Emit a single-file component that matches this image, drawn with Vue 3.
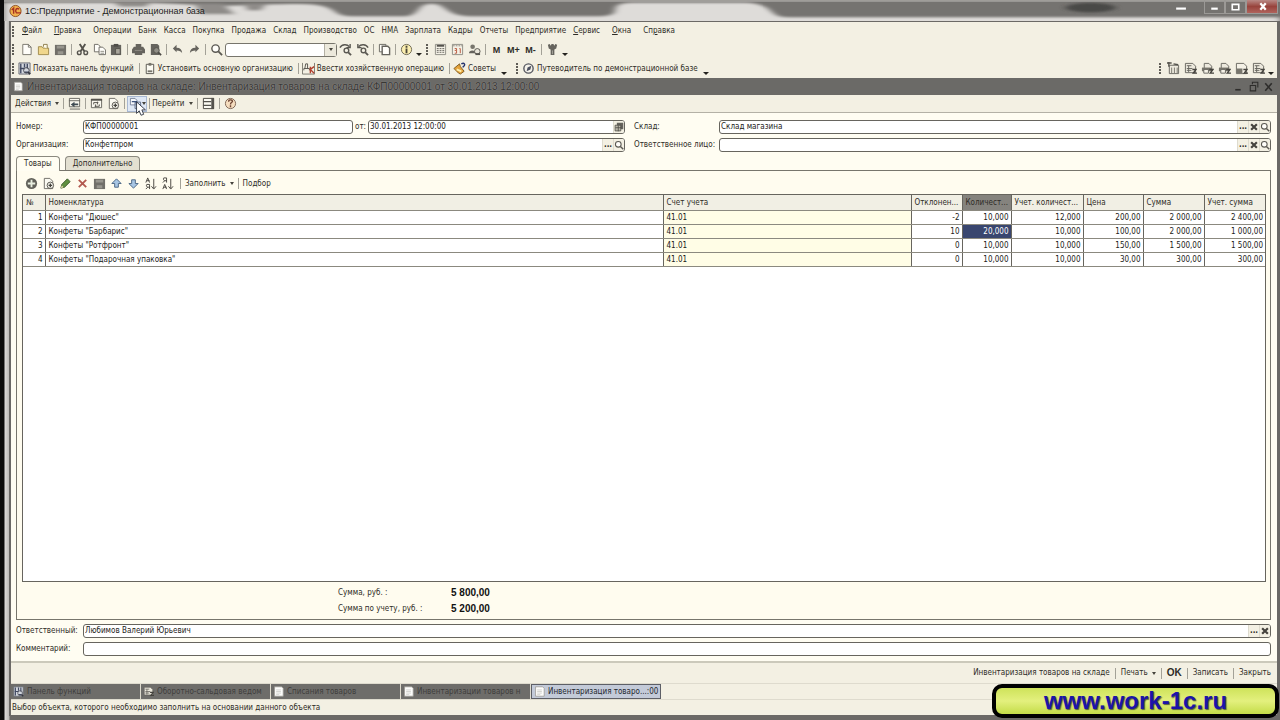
<template>
  <div class="desktop">
    <svg class="sprite" aria-hidden="true">
      <symbol id="i-new" viewBox="0 0 14 14"><path d="M3 1.500h6l3 3v8H3z" fill="#fffefa" stroke="#77756c" /><path d="M9 1.500v3h3" fill="none" stroke="#77756c" /></symbol>
      <symbol id="i-open" viewBox="0 0 14 14"><path d="M1.500 4h4l1 1.500h6v7h-11z" fill="#f0d78c" stroke="#a08a4c" /><path d="M7 4V1.500h4V6" fill="#fffbe8" stroke="#8b7b4c" /></symbol>
      <symbol id="i-save" viewBox="0 0 14 14"><path d="M1 2h12v11H1z" fill="#716f69" /><path d="M3 3h8v3H3zM4 9h6v3H4z" fill="#98968e" /></symbol>
      <symbol id="i-cut" viewBox="0 0 14 14"><path d="M4 1l5 8M10 1L5 9" stroke="#55534d" stroke-width="2" /><circle cx="3.500" cy="10.500" r="2" fill="none" stroke="#55534d" stroke-width="1.500" /><circle cx="10.500" cy="10.500" r="2" fill="none" stroke="#55534d" stroke-width="1.500" /></symbol>
      <symbol id="i-copy" viewBox="0 0 14 14"><path d="M1.500 1.500h4l2 2v6h-6z" fill="#fffefa" stroke="#6d6b64" /><path d="M6.500 4.500h4l3 3v5h-7z" fill="#fffefa" stroke="#6d6b64" /><path d="M8 9h4M8 11h4" stroke="#8d8b83" /></symbol>
      <symbol id="i-paste" viewBox="0 0 14 14"><path d="M1 2h11v11H1z" fill="#66645e" /><path d="M4 1h5v3H4z" fill="#4f4d48" /><path d="M6 6h5v6H6z" fill="#a8a59b" stroke="#55534d" /></symbol>
      <symbol id="i-print" viewBox="0 0 14 14"><path d="M4 1h6v3h2l2 3v4h-3v2H3v-2H0V7l2-3h2z" fill="#66645e" /><path d="M3 8h8" stroke="#8f8d86" /></symbol>
      <symbol id="i-preview" viewBox="0 0 14 14"><path d="M2 1h7l2 2v10H2z" fill="#66645e" /><circle cx="8" cy="8" r="3" fill="#908e86" stroke="#55534d" /><path d="M10 10l3 3" stroke="#4b4944" stroke-width="2" /></symbol>
      <symbol id="i-undo" viewBox="0 0 14 14"><path d="M2 6l4-4v3c4 0 6 2 6 6-1-2-3-3-6-3v2z" fill="#66645e" /></symbol>
      <symbol id="i-redo" viewBox="0 0 14 14"><path d="M12 6L8 2v3c-4 0-6 2-6 6 1-2 3-3 6-3v2z" fill="#66645e" /></symbol>
      <symbol id="i-zoom" viewBox="0 0 14 14"><circle cx="6" cy="6" r="4" fill="#fffefa" stroke="#5a5852" stroke-width="1.500" /><path d="M9 9l4 4" stroke="#5a5852" stroke-width="2" /></symbol>
      <symbol id="i-findnext" viewBox="0 0 14 14"><path d="M1 5c2-4 8-4 10-1M12 1v4H8" fill="none" stroke="#5a5852" stroke-width="1.500" /><circle cx="8" cy="8" r="2.500" fill="none" stroke="#5a5852" stroke-width="1.500" /><path d="M10 10l3 3" stroke="#5a5852" stroke-width="2" /></symbol>
      <symbol id="i-findprev" viewBox="0 0 14 14"><path d="M13 5C11 1 5 1 3 4M2 1v4h4" fill="none" stroke="#5a5852" stroke-width="1.500" /><circle cx="8" cy="8" r="2.500" fill="none" stroke="#5a5852" stroke-width="1.500" /><path d="M10 10l3 3" stroke="#5a5852" stroke-width="2" /></symbol>
      <symbol id="i-windows" viewBox="0 0 14 14"><path d="M1.500 1.500h7v8h-7z" fill="#fffefa" stroke="#66645e" /><path d="M4.500 3.500h6l2 2v7h-8z" fill="#fffefa" stroke="#66645e" stroke-width="1.500" /></symbol>
      <symbol id="i-info" viewBox="0 0 14 14"><circle cx="7" cy="7" r="5.500" fill="#fbeeb0" stroke="#6b6650" /><path d="M7 6v5M7 3v2" stroke="#4a4638" stroke-width="2" /></symbol>
      <symbol id="i-calc" viewBox="0 0 14 14"><path d="M1.500 1.500h11v11h-11z" fill="#f4f1e6" stroke="#8d8b83" /><path d="M3 3h8" stroke="#55534d" stroke-width="2" /><path d="M3 6h8M3 8h8M3 10h8" stroke="#66645e" stroke-dasharray="2 1" /></symbol>
      <symbol id="i-cal" viewBox="0 0 14 14"><path d="M1.500 1.500h11v11h-11z" fill="#f4f1e6" stroke="#8d8b83" /><path d="M2 3h10" stroke="#8a867c" stroke-dasharray="2 1" /><path d="M4 6h2v2H4M6 8v3H4M9 6h1v5" stroke="#b8553b" fill="none" /></symbol>
      <symbol id="i-users" viewBox="0 0 14 14"><circle cx="5" cy="4" r="2.500" fill="#77756c" /><path d="M1 11c0-4 7-4 8 0z" fill="#66645e" /><circle cx="10" cy="9" r="3" fill="#e9e6da" stroke="#55534d" /><path d="M8 12h5" stroke="#55534d" stroke-width="2" /></symbol>
      <symbol id="i-wrench" viewBox="0 0 14 14"><path d="M2 2l2-1 1 2 1-2h2l1 2 1-2 2 1-1 4-2 1v6H5V7L3 6z" fill="#66645e" /><path d="M7 8v4" stroke="#a5a399" /></symbol>
      <symbol id="i-panel" viewBox="0 0 14 14"><path d="M1 1h12v12H1z" fill="#d3d7de" stroke="#6a6c74" /><path d="M3 2v10M7 2v4M10 2v5M2 7h5M7 11h4" stroke="#414a63" stroke-width="1.500" /><circle cx="9" cy="9" r="3" fill="none" stroke="#4d4f58" /><path d="M11 11l2 2" stroke="#33353d" stroke-width="2" /></symbol>
      <symbol id="i-org" viewBox="0 0 14 14"><path d="M3.500 2.500h8v10h-8z" fill="#fbfaf2" stroke="#55534d" /><path d="M6 1h3v3H6z" fill="#77756c" /><path d="M5 10h5" stroke="#77756c" stroke-width="2" /></symbol>
      <symbol id="i-dtkt" viewBox="0 0 14 14"><path d="M.500 1v12h13V1" fill="none" stroke="#77756c" /><path d="M3 7l1-5h2v5M2 9V7h6v2" fill="none" stroke="#55534d" /><path d="M9 5v7M13 5L9 8l4 4" fill="none" stroke="#b3402e" stroke-width="1.500" /></symbol>
      <symbol id="i-tips" viewBox="0 0 14 14"><path d="M1 7l6-5 1 3 4 5-4 3-2-1z" fill="#e5a33b" stroke="#7c5b23" /><path d="M4 8l5 2" stroke="#fff0b0" stroke-width="2" /><path d="M9 2c3-2 5 1 2 3v1" fill="none" stroke="#26346d" stroke-width="1.500" /></symbol>
      <symbol id="i-guide" viewBox="0 0 14 14"><circle cx="7" cy="7" r="5" fill="#f4f2ea" stroke="#55575f" stroke-width="1.500" /><path d="M5 10l1-4 4-2-1 4z" fill="#4c5060" /></symbol>
      <symbol id="i-report" viewBox="0 0 14 14"><path d="M1.500 1.500h8l3 3v7h-11z" fill="#ece9dd" stroke="#66645e" /><path d="M3 4h5M3 7h6M3 9h5M5 4v7" stroke="#66645e" /><path d="M9 8h4l-3 4h4" fill="none" stroke="#45433e" stroke-width="1.500" /></symbol>
      <symbol id="i-reportprint" viewBox="0 0 14 14"><path d="M3.500 1.500h5l3 3v3h-8z" fill="#ece9dd" stroke="#66645e" /><path d="M1 6h11v4H1z" fill="#77756c" /><path d="M3 8h5v4H3z" fill="#f5f2e7" stroke="#66645e" /><path d="M9 8h4l-3 4h4" fill="none" stroke="#45433e" stroke-width="1.500" /></symbol>
      <symbol id="i-reportgrid" viewBox="0 0 14 14"><path d="M2.500 3.500h10v9h-10z" fill="#ece9dd" stroke="#66645e" /><path d="M0 1h5M2 0v5M7 2l5 1" stroke="#55534d" stroke-width="1.500" /><path d="M5 6v6M8 6v6M11 6v6" stroke="#77756c" /></symbol>
      <symbol id="i-reportblock" viewBox="0 0 14 14"><path d="M1.500 1.500h8l3 3v8h-11z" fill="#f4f1e6" stroke="#66645e" /><path d="M2 7h6v5H2z" fill="#77756c" /><path d="M9 8h4l-3 4h4" fill="none" stroke="#45433e" stroke-width="1.500" /></symbol>
      <symbol id="i-doc" viewBox="0 0 14 14"><path d="M2 1h9l2 2v10H2z" fill="#fdfdfb" stroke="#9a9893" /><path d="M4 5h6M4 7h6M4 9h6M4 11h4" stroke="#c8c8c4" /></symbol>
      <symbol id="i-goto" viewBox="0 0 14 14"><path d="M1.500 1.500h11v9h-11z" fill="#f9f7ee" stroke="#66645e" /><path d="M1 4h12M2 13h11" stroke="#66645e" /><path d="M3 8l4-3v2h4v2H7v2z" fill="#3f4a52" /></symbol>
      <symbol id="i-refresh" viewBox="0 0 14 14"><path d="M1.500 2.500h11v9h-11z" fill="#f9f7ee" stroke="#66645e" /><path d="M1 3h12" stroke="#55534d" stroke-width="2" /><path d="M4 8V6h5M10 8v2H5M8 5v3M6 8v3" fill="none" stroke="#55534d" /></symbol>
      <symbol id="i-docadd" viewBox="0 0 14 14"><path d="M2.500 1.500h6l3 3v8h-9z" fill="#fbfaf2" stroke="#6d6b64" /><circle cx="9" cy="9" r="3.500" fill="#fbfaf2" stroke="#55534d" /><path d="M7 9h4M9 7v4" stroke="#45433e" stroke-width="1.500" /></symbol>
      <symbol id="i-based" viewBox="0 0 14 14"><path d="M1.500 1.500h5l2 2v5h-7z" fill="#f7f9fc" stroke="#77839a" /><path d="M6.500 5.500h6v7h-6z" fill="#dbe4f2" stroke="#5b6a86" /><path d="M3 5h5v4" fill="none" stroke="#3f557e" stroke-width="1.500" /></symbol>
      <symbol id="i-list" viewBox="0 0 14 14"><path d="M1.500 1.500h11v11h-11z" fill="#fbfaf2" stroke="#45433e" /><path d="M1 5h9M1 9h9" stroke="#55534d" stroke-width="1.500" /><path d="M10 1h3v12h-3z" fill="#55534d" /></symbol>
      <symbol id="i-help" viewBox="0 0 14 14"><circle cx="7" cy="7" r="5.500" fill="#f5ddbf" stroke="#7b6252" /><path d="M5 5c0-3 5-2 4 0-1 1-2 1-2 3M7 9v2" fill="none" stroke="#6f4635" stroke-width="1.500" /></symbol>
      <symbol id="i-add" viewBox="0 0 14 14"><circle cx="7" cy="7" r="6" fill="#62615a" /><path d="M7 3v8M3 7h8" stroke="#e9efe0" stroke-width="2" /></symbol>
      <symbol id="i-edit" viewBox="0 0 14 14"><path d="M2 12l1-4 6-6 3 3-6 6z" fill="#5f8f3f" stroke="#3d5a2d" /><path d="M2 12l3-1-2-2z" fill="#e4d9a8" /></symbol>
      <symbol id="i-del" viewBox="0 0 14 14"><path d="M3 3l8 8M11 3l-8 8" stroke="#b35a50" stroke-width="2" /></symbol>
      <symbol id="i-up" viewBox="0 0 14 14"><path d="M7 2l5 5H9v4H5V7H2z" fill="#a8c6e4" stroke="#4a6583" /></symbol>
      <symbol id="i-down" viewBox="0 0 14 14"><path d="M7 12L2 7h3V3h4v4h3z" fill="#a8c6e4" stroke="#4a6583" /></symbol>
      <symbol id="i-sortaz" viewBox="0 0 14 14"><path d="M2 6l2-5 2 5M3 4h3M6 13V8H3c-1 1 0 3 1 3h2M4 11l-2 2" fill="none" stroke="#45433e" /><path d="M10.500 2v10M8 10l2.500 3L13 10" fill="none" stroke="#45433e" /></symbol>
      <symbol id="i-sortza" viewBox="0 0 14 14"><path d="M6 6V1H3c-1 1 0 3 1 3h2M4 4L2 6M2 13l2-5 2 5M3 11h3" fill="none" stroke="#45433e" /><path d="M10.500 2v10M8 10l2.500 3L13 10" fill="none" stroke="#45433e" /></symbol>
      <symbol id="i-x" viewBox="0 0 14 14"><path d="M3 3l8 8M11 3l-8 8" stroke="#45433e" stroke-width="3" /></symbol>
      <symbol id="i-picker" viewBox="0 0 14 14"><path d="M4 1h9v9H4z" fill="#66645e" /><path d="M1.500 4.500h8v8h-8z" fill="#b9b6a9" stroke="#45433e" /><path d="M2 8h8M6 5v8" stroke="#45433e" /></symbol>
    </svg>

    <header class="titlebar">
      <svg class="glass" viewBox="0 0 1280 22" preserveAspectRatio="none" aria-hidden="true">
        <defs><filter id="soft"><feGaussianBlur stdDeviation="4 1" /></filter></defs>
        <rect width="1280" height="22" fill="#757370" />
        <g filter="url(#soft)">
          <path d="M0 3H110C180 3 190 6 220 6S300 2 318 6 330 17 350 17H405C418 14 414 4 429 4S442 16 465 17H600C625 16 600 4 630 3H745C775 5 765 17 785 18H1280V24H0z" fill="#dedcd9" />
          <path d="M108 2h42l-8 5h-26zM190 4h30l12 11h-34zM240 4h24l-6 7h-14z" fill="#8f8c89" />
          <ellipse cx="1090" cy="8" rx="25" ry="5" fill="#4a4846" />
        </g>
        <path d="M0 1H1280" stroke="#c4c2bf" />
      </svg>
      <svg class="logo" viewBox="0 0 14 14" aria-hidden="true"><circle cx="7" cy="7" r="6" fill="#f1b04c" stroke="#8d4f22" /><path d="M3 6l2-2v6M11 5C8 3 6 6 8 9h5" fill="none" stroke="#a83222" stroke-width="1.500" /></svg>
      <h1>1С:Предприятие - Демонстрационная база</h1>
      <div class="win-buttons">
        <button class="win plain" aria-label="Скрыть панель"><svg viewBox="0 0 12 12"><path d="M2 7h9" stroke="#fff" stroke-width="2" /></svg></button>
        <button class="win" aria-label="Свернуть"><svg viewBox="0 0 12 12"><path d="M3 8h6" stroke="#fff" stroke-width="2" /></svg></button>
        <button class="win" aria-label="Развернуть"><svg viewBox="0 0 12 12"><path d="M3 9V4h6v5z" fill="none" stroke="#fff" stroke-width="1.500" /></svg></button>
        <button class="win close" aria-label="Закрыть окно"><svg viewBox="0 0 12 12"><path d="M4 3l5 6M9 3L4 9" stroke="#fff" stroke-width="2" /></svg></button>
      </div>
    </header>

    <div class="window">
      <nav class="bar menu">
        <span class="grip"></span>
        <button v-for="m in menu" :key="m.text" :class="{ wide: m.key }">
          <u v-if="m.key === 1">{{ m.text[0] }}</u><template v-if="m.key === 1">{{ m.text.slice(1) }}</template>
          <template v-else-if="m.key">{{ m.text.slice(0, 2) }}<u>{{ m.text[2] }}</u>{{ m.text.slice(3) }}</template>
          <template v-else>{{ m.text }}</template>
        </button>
      </nav>

      <div class="bar">
        <span class="grip"></span>
        <template v-for="(t, i) in mainTools" :key="i">
          <span v-if="t === '|'" class="sep"></span>
          <span v-else-if="t === ':'" class="grip"></span>
          <button v-else-if="t === 'v'" class="more" aria-label="Ещё"></button>
          <div v-else-if="t === 'search'" class="combo">
            <input type="text" aria-label="Поиск" />
            <button aria-label="История поиска"><i class="arrow"></i></button>
          </div>
          <button v-else-if="t[0] === 'M'" class="tool mem">{{ t }}</button>
          <button v-else class="tool" :aria-label="t"><svg><use :href="`#i-${t}`" /></svg></button>
        </template>
      </div>

      <div class="bar">
        <span class="grip"></span>
        <button class="cmd"><svg><use href="#i-panel" /></svg>Показать панель функций</button>
        <span class="sep wide-sep"></span>
        <button class="cmd"><svg><use href="#i-org" /></svg>Установить основную организацию</button>
        <span class="sep wide-sep"></span>
        <button class="cmd"><svg><use href="#i-dtkt" /></svg>Ввести хозяйственную операцию</button>
        <span class="sep wide-sep"></span>
        <button class="cmd"><svg><use href="#i-tips" /></svg>Советы</button>
        <button class="more wide-more" aria-label="Ещё"></button>
        <span class="grip"></span>
        <button class="cmd"><svg><use href="#i-guide" /></svg>Путеводитель по демонстрационной базе</button>
        <button class="more wide-more" aria-label="Ещё"></button>
        <div class="right">
          <span class="grip"></span>
          <button v-for="(r, i) in reports" :key="i" class="tool" :aria-label="`Отчет ${i + 1}`"><svg><use :href="`#i-${r}`" /></svg></button>
          <button class="more" aria-label="Ещё"></button>
        </div>
      </div>

      <div class="doc-title">
        <svg><use href="#i-doc" /></svg>
        <h2>Инвентаризация товаров на складе: Инвентаризация товаров на складе КФП00000001 от 30.01.2013 12:00:00</h2>
        <div class="doc-buttons">
          <button aria-label="Свернуть документ"><svg viewBox="0 0 12 12"><path d="M3 9h5" stroke="#2e2d2b" stroke-width="1.500" /></svg></button>
          <button aria-label="Восстановить документ"><svg viewBox="0 0 12 12"><path d="M5 4V2h5v5M3 5h5v5H3z" fill="none" stroke="#2e2d2b" /></svg></button>
          <button aria-label="Закрыть документ"><svg viewBox="0 0 12 12"><path d="M3 3l6 7M9 3l-6 7" stroke="#2e2d2b" stroke-width="1.500" /></svg></button>
        </div>
      </div>

      <div class="bar doc-bar">
        <button class="drop">Действия<i class="arrow"></i></button>
        <span class="sep"></span>
        <button class="tool" aria-label="Перейти к списку"><svg><use href="#i-goto" /></svg></button>
        <span class="sep"></span>
        <button class="tool" aria-label="Обновить"><svg><use href="#i-refresh" /></svg></button>
        <button class="tool" aria-label="Скопировать"><svg><use href="#i-docadd" /></svg></button>
        <span class="sep"></span>
        <button class="tool hover" aria-label="Ввести на основании">
          <svg><use href="#i-based" /></svg><i class="arrow"></i>
          <svg class="cursor" viewBox="0 0 12 18"><path d="M1 1v13l3-3 2 5 3-1-2-5h4z" fill="#fff" stroke="#2d3440" /></svg>
        </button>
        <span class="sep"></span>
        <button class="drop">Перейти<i class="arrow"></i></button>
        <span class="sep"></span>
        <button class="tool" aria-label="Список"><svg><use href="#i-list" /></svg></button>
        <span class="sep"></span>
        <button class="tool" aria-label="Справка"><svg><use href="#i-help" /></svg></button>
      </div>

      <main class="form">
        <div class="fields">
          <div class="line">
            <label for="number" class="lbl">Номер:</label>
            <div class="box number"><input id="number" v-model="doc.number" type="text" /></div>
            <label for="date" class="from">от:</label>
            <div class="box"><input id="date" v-model="doc.date" type="text" /><button aria-label="Календарь"><svg><use href="#i-picker" /></svg></button></div>
          </div>
          <div class="line">
            <label for="store" class="lbl long">Склад:</label>
            <div class="box"><input id="store" v-model="doc.store" type="text" /><button>...</button><button aria-label="Очистить склад"><svg><use href="#i-x" /></svg></button><button aria-label="Открыть склад"><svg><use href="#i-zoom" /></svg></button></div>
          </div>
          <div class="line">
            <label for="org" class="lbl">Организация:</label>
            <div class="box"><input id="org" v-model="doc.org" type="text" /><button>...</button><button aria-label="Открыть организацию"><svg><use href="#i-zoom" /></svg></button></div>
          </div>
          <div class="line">
            <label for="person" class="lbl long">Ответственное лицо:</label>
            <div class="box"><input id="person" v-model="doc.person" type="text" /><button>...</button><button aria-label="Очистить лицо"><svg><use href="#i-x" /></svg></button><button aria-label="Открыть лицо"><svg><use href="#i-zoom" /></svg></button></div>
          </div>
        </div>

        <div class="tabs">
          <button v-for="t in tabs" :key="t" :class="{ active: t === activeTab }" @click="activeTab = t">{{ t }}</button>
        </div>

        <section class="panel">
          <div class="bar table-bar">
            <button v-for="t in tableTools" :key="t" class="tool" :aria-label="t"><svg><use :href="`#i-${t}`" /></svg></button>
            <span class="sep"></span>
            <button class="drop">Заполнить<i class="arrow"></i></button>
            <span class="sep"></span>
            <button class="drop">Подбор</button>
          </div>

          <div class="grid">
            <table>
              <colgroup>
                <col class="c-n" /><col /><col class="c-acc" /><col class="c-dev" /><col class="c-qty" /><col class="c-uqty" /><col class="c-price" /><col class="c-sum" /><col class="c-sum" />
              </colgroup>
              <thead>
                <tr>
                  <th v-for="(c, i) in columns" :key="c" :class="{ current: i === 4 }">{{ c }}</th>
                </tr>
              </thead>
              <tbody>
                <tr v-for="(r, ri) in rows" :key="ri">
                  <td v-for="(v, i) in r" :key="i" :class="{ num: i === 0 || i > 2, acc: i === 2, selected: ri === 1 && i === 4 }">{{ v }}</td>
                </tr>
              </tbody>
            </table>
          </div>

          <dl class="totals">
            <dt>Сумма, руб. :</dt><dd>5 800,00</dd>
            <dt>Сумма по учету, руб. :</dt><dd>5 200,00</dd>
          </dl>
        </section>

        <div class="bottom-fields">
          <div class="line">
            <label for="resp" class="lbl">Ответственный:</label>
            <div class="box"><input id="resp" v-model="doc.responsible" type="text" /><button>...</button><button aria-label="Очистить ответственного"><svg><use href="#i-x" /></svg></button></div>
          </div>
          <div class="line">
            <label for="comment" class="lbl">Комментарий:</label>
            <div class="box"><input id="comment" v-model="doc.comment" type="text" /></div>
          </div>
        </div>
      </main>

      <footer class="bar actions">
        <button class="drop">Инвентаризация товаров на складе</button>
        <span class="sep"></span>
        <button class="drop">Печать<i class="arrow"></i></button>
        <span class="sep"></span>
        <button class="drop ok">OK</button>
        <span class="sep"></span>
        <button class="drop">Записать</button>
        <span class="sep"></span>
        <button class="drop">Закрыть</button>
      </footer>

      <div class="taskbar">
        <button v-for="w in windows" :key="w.text" :class="{ active: w.active }"><svg><use :href="`#i-${w.icon}`" /></svg><span>{{ w.text }}</span></button>
      </div>
      <div class="status">Выбор объекта, которого необходимо заполнить на основании данного объекта</div>
    </div>

    <a class="site" href="#">www.work-1c.ru</a>
  </div>
</template>

<script setup>
import { reactive, ref } from 'vue'

// key: which letter is underlined (1 - first, 3 - third)
const menu = [
  { text: 'Файл', key: 1 },
  { text: 'Правка', key: 1 },
  { text: 'Операции' },
  { text: 'Банк' },
  { text: 'Касса' },
  { text: 'Покупка' },
  { text: 'Продажа' },
  { text: 'Склад' },
  { text: 'Производство' },
  { text: 'ОС' },
  { text: 'НМА' },
  { text: 'Зарплата' },
  { text: 'Кадры' },
  { text: 'Отчеты' },
  { text: 'Предприятие' },
  { text: 'Сервис', key: 1 },
  { text: 'Окна', key: 1 },
  { text: 'Справка', key: 3 }
]

const mainTools = [
  'new', 'open', 'save', '|', 'cut', 'copy', 'paste', '|', 'print', 'preview', '|',
  'undo', 'redo', '|', 'zoom', 'search', 'findnext', 'findprev', '|', 'windows', '|',
  'info', 'v', ':', 'calc', 'cal', 'users', '|', 'M', 'M+', 'M-', '|', 'wrench', 'v'
]
const reports = ['reportgrid', 'report', 'reportprint', 'reportprint', 'reportblock', 'report']
const tableTools = ['add', 'docadd', 'edit', 'del', 'save', 'up', 'down', 'sortaz', 'sortza']

const doc = reactive({
  number: 'КФП00000001',
  date: '30.01.2013 12:00:00',
  store: 'Склад магазина',
  org: 'Конфетпром',
  person: '',
  responsible: 'Любимов Валерий Юрьевич',
  comment: ''
})

const tabs = ['Товары', 'Дополнительно']
const activeTab = ref('Товары')

const columns = ['№', 'Номенклатура', 'Счет учета', 'Отклонен...', 'Количест...', 'Учет. количест...', 'Цена', 'Сумма', 'Учет. сумма']
const rows = [
  [1, 'Конфеты "Дюшес"', '41.01', '-2', '10,000', '12,000', '200,00', '2 000,00', '2 400,00'],
  [2, 'Конфеты "Барбарис"', '41.01', '10', '20,000', '10,000', '100,00', '2 000,00', '1 000,00'],
  [3, 'Конфеты "Ротфронт"', '41.01', '0', '10,000', '10,000', '150,00', '1 500,00', '1 500,00'],
  [4, 'Конфеты "Подарочная упаковка"', '41.01', '0', '10,000', '10,000', '30,00', '300,00', '300,00']
]

const windows = [
  { text: 'Панель функций', icon: 'panel' },
  { text: 'Оборотно-сальдовая ведом', icon: 'report' },
  { text: 'Списания товаров', icon: 'doc' },
  { text: 'Инвентаризации товаров н', icon: 'doc' },
  { text: 'Инвентаризация товаро...:00', icon: 'doc', active: true }
]
</script>

<style>
body {
  margin: 0;
  background: #6b6966;
}
</style>

<style scoped>
.desktop {
  position: relative;
  display: flex;
  flex-direction: column;
  min-height: 100vh;
  box-sizing: border-box;
  padding: 0 2px 4px 9px;
  background: linear-gradient(90deg, #0c0c0c 4px, #dcdad8 5px, #bdbbb8 9px, #6b6966 10px);
  font-family: "DejaVu Sans Condensed", "Open Sans", "Liberation Sans", sans-serif;
  font-size: 8px;
  line-height: 12px;
  color: #2e2c26;
  white-space: nowrap;
}

.sprite {
  position: absolute;
  width: 0;
  height: 0;
}

button {
  font: inherit;
  color: inherit;
  background: none;
  border: 0;
  padding: 0;
  margin: 0;
  white-space: nowrap;
}

svg {
  display: block;
  flex: none;
  width: 13px;
  height: 13px;
}

.titlebar {
  position: relative;
  display: flex;
  align-items: center;
  height: 21px;
}

.glass {
  position: absolute;
  left: -5px;
  top: 0;
  width: calc(100% + 7px);
  height: 21px;
}

.logo {
  position: relative;
  height: 14px;
}

h1,
h2 {
  font-family: "Liberation Sans", Arial, sans-serif;
  font-size: 9px;
  font-weight: normal;
  margin: 0;
}

h1 {
  position: relative;
  margin-left: 3px;
  color: #1d1c1b;
}

.win-buttons {
  position: relative;
  display: flex;
  align-self: flex-start;
  margin-left: auto;
}

.win {
  display: flex;
  align-items: center;
  justify-content: center;
  width: 21px;
  height: 14px;
  border: 1px solid #9b9996;
  border-top: 0;
}

.win.plain {
  width: 24px;
  margin-right: 12px;
  border: 0;
}

.win.close {
  width: 32px;
  background: linear-gradient(#b98a86, #98433c 50%, #b0635c);
}

.window {
  display: flex;
  flex-direction: column;
  flex: 1;
  border: 1px solid #6b6966;
  border-left-width: 2px;
  background: #f3f0e3;
}

.bar {
  display: flex;
  align-items: center;
  height: 19px;
}

.menu {
  height: 18px;
}

.menu button {
  margin-right: 7px;
}

.menu .wide {
  margin-right: 12px;
}

.grip {
  width: 2px;
  height: 11px;
  margin: 0 4px 0 1px;
  background: repeating-linear-gradient(#5f5d57 0 2px, transparent 2px 3px);
}

.menu .grip {
  margin-right: 8px;
}

.tool {
  display: flex;
  align-items: center;
  justify-content: center;
  width: 17px;
  height: 16px;
}

.mem {
  font-family: "Liberation Sans", Arial, sans-serif;
  font-size: 9px;
  font-weight: bold;
}

.sep {
  width: 1px;
  height: 11px;
  margin: 0 2px;
  background: #a3a197;
}

.wide-sep {
  margin: 0 3px 0 5px;
}

.more {
  align-self: flex-end;
  width: 0;
  height: 0;
  margin: 0 3px 3px 1px;
  border: 3px solid transparent;
  border-top-color: #24231f;
  border-bottom: 0;
}

.wide-more {
  margin: 0 8px 3px 5px;
}

.arrow {
  display: inline-block;
  flex: none;
  width: 0;
  height: 0;
  border: 2px solid transparent;
  border-top: 3px solid #45433c;
  border-bottom: 0;
}

.combo {
  display: flex;
  width: 110px;
  height: 12px;
  border: 1px solid #77756c;
  border-radius: 3px;
  background: #fff;
}

.combo button {
  display: flex;
  align-items: center;
  justify-content: center;
  width: 12px;
  border-left: 1px solid #b3b0a4;
  background: #ece9dc;
}

input {
  flex: 1;
  min-width: 0;
  height: 12px;
  border: 0;
  padding: 0 1px;
  margin: 0;
  background: none;
  font: inherit;
  color: #1c1b18;
  outline: 0;
}

.cmd {
  display: flex;
  align-items: center;
  gap: 2px;
}

.right {
  display: flex;
  align-items: center;
  align-self: stretch;
  margin-left: auto;
}

.doc-title {
  display: flex;
  align-items: center;
  gap: 4px;
  height: 17px;
  padding-left: 2px;
  background: #6b6a67;
  color: #383735;
}

.doc-title > svg {
  width: 10px;
  height: 11px;
}

.doc-title h2 {
  font-size: 10px;
  text-shadow: 0 0 1px #a5a3a0;
}

.doc-buttons {
  display: flex;
  gap: 2px;
  margin-left: auto;
  padding-right: 2px;
}

.doc-bar {
  height: 17px;
  padding-left: 4px;
  border-bottom: 1px solid #b4b1a6;
}

.drop {
  display: flex;
  align-items: center;
  gap: 4px;
}

.doc-bar .sep,
.table-bar .sep,
.actions .sep {
  margin: 0 4px;
}

.doc-bar .tool + .sep {
  margin: 0 2px;
}

.doc-bar .drop + .sep {
  margin: 0 2px 0 4px;
}

.hover {
  position: relative;
  width: 20px;
  border: 1px solid #a8b8d2;
  background: #dfe8f5;
}

.cursor {
  position: absolute;
  left: 7px;
  top: 4px;
  width: 12px;
  height: 16px;
}

.form {
  display: flex;
  flex-direction: column;
  flex: 1;
  padding: 7px 6px 5px 5px;
  background: #fffdf2;
  border-bottom: 2px solid #cbc9bb;
}

.fields {
  display: grid;
  grid-template-columns: 609fr 637fr;
  gap: 4px 9px;
}

.line {
  display: flex;
  align-items: center;
}

.lbl {
  width: 67px;
}

.long {
  width: 85px;
}

.from {
  width: 13px;
  margin-left: 2px;
}

.box {
  display: flex;
  flex: 1;
  min-width: 0;
  height: 12px;
  border: 1px solid #67655e;
  border-radius: 3px;
  background: #fff;
  overflow: hidden;
}

.box.number {
  flex: none;
  width: 268px;
}

.box button {
  display: flex;
  align-items: center;
  justify-content: center;
  width: 11px;
  background: #f3f0e3;
  border-left: 1px solid #dedbce;
  font-weight: bold;
}

.box svg {
  width: 10px;
  height: 10px;
}

.tabs {
  display: flex;
  gap: 5px;
  margin-top: 4px;
}

.tabs button {
  height: 14px;
  padding: 0 7px;
  border: 1px solid #8b897f;
  border-bottom: 0;
  border-radius: 4px 4px 0 0;
  background: #e3e0d1;
}

.tabs .active {
  position: relative;
  height: 15px;
  margin-bottom: -1px;
  background: #fffdf2;
}

.panel {
  display: flex;
  flex-direction: column;
  flex: 1;
  border: 1px solid #77756c;
  background: #fffcef;
}

.table-bar {
  height: 23px;
  padding: 2px 0 0 6px;
  box-sizing: border-box;
}

.grid {
  flex: 1;
  margin: 0 4px 0 5px;
  border: 1px solid #67655e;
  background: #fff;
}

table {
  width: 100%;
  table-layout: fixed;
  border-collapse: collapse;
}

.c-n { width: 22px; }
.c-acc { width: 248px; }
.c-dev { width: 51px; }
.c-qty { width: 49px; }
.c-uqty { width: 72px; }
.c-price { width: 60px; }
.c-sum { width: 61px; }

th,
td {
  box-sizing: border-box;
  padding: 1px 2px 0 3px;
  border-right: 1px solid #67655e;
  border-bottom: 1px solid #8b897f;
  overflow: hidden;
  text-align: left;
  font-weight: normal;
}

th {
  height: 15px;
  background: #f1efe4;
}

td {
  height: 14px;
  color: #1c1b18;
}

th:last-child,
td:last-child {
  border-right: 0;
}

.num {
  text-align: right;
}

.acc {
  background: #fffde6;
}

.current {
  background: #85837e;
}

.selected {
  background: #39466f;
  color: #fff;
}

.totals {
  display: grid;
  grid-template-columns: 113px auto;
  gap: 4px 0;
  justify-content: start;
  margin: 5px 0 4px 321px;
}

.totals dd {
  margin: 0;
  font-family: "Liberation Sans", Arial, sans-serif;
  font-size: 10px;
  font-weight: bold;
  color: #111;
}

.bottom-fields {
  display: grid;
  gap: 4px;
  margin-top: 4px;
}

.actions {
  justify-content: flex-end;
  padding-right: 6px;
  height: 20px;
}

.actions .sep {
  margin: 0 5px;
}

.ok {
  font-family: "Liberation Sans", Arial, sans-serif;
  font-size: 10px;
  font-weight: bold;
}

.taskbar {
  display: flex;
  border-top: 1px solid #dedbce;
  border-bottom: 1px solid #dedbce;
}

.taskbar button {
  display: flex;
  align-items: center;
  gap: 3px;
  width: 130px;
  height: 15px;
  padding-left: 2px;
  border-right: 1px solid #dedbce;
  background: #6e6d6a;
  color: #3f3e3c;
}

.taskbar .active {
  border: 1px solid #5d5f66;
  background: #c3cad8;
  color: #24282f;
}

.taskbar svg {
  width: 11px;
  height: 11px;
}

.status {
  padding: 2px 1px 1px;
}

.site {
  position: absolute;
  right: 1px;
  bottom: 2px;
  width: 279px;
  height: 26px;
  border: 4px solid #000;
  border-radius: 10px;
  background: linear-gradient(#cfe35a, #e3f07e 50%, #c4dc48);
  color: #1c14a8;
  font-family: "Liberation Sans", Arial, sans-serif;
  font-size: 24px;
  font-weight: bold;
  line-height: 26px;
  text-align: center;
  text-decoration: none;
  text-shadow: 1px 1px 1px #55603a;
}
</style>
